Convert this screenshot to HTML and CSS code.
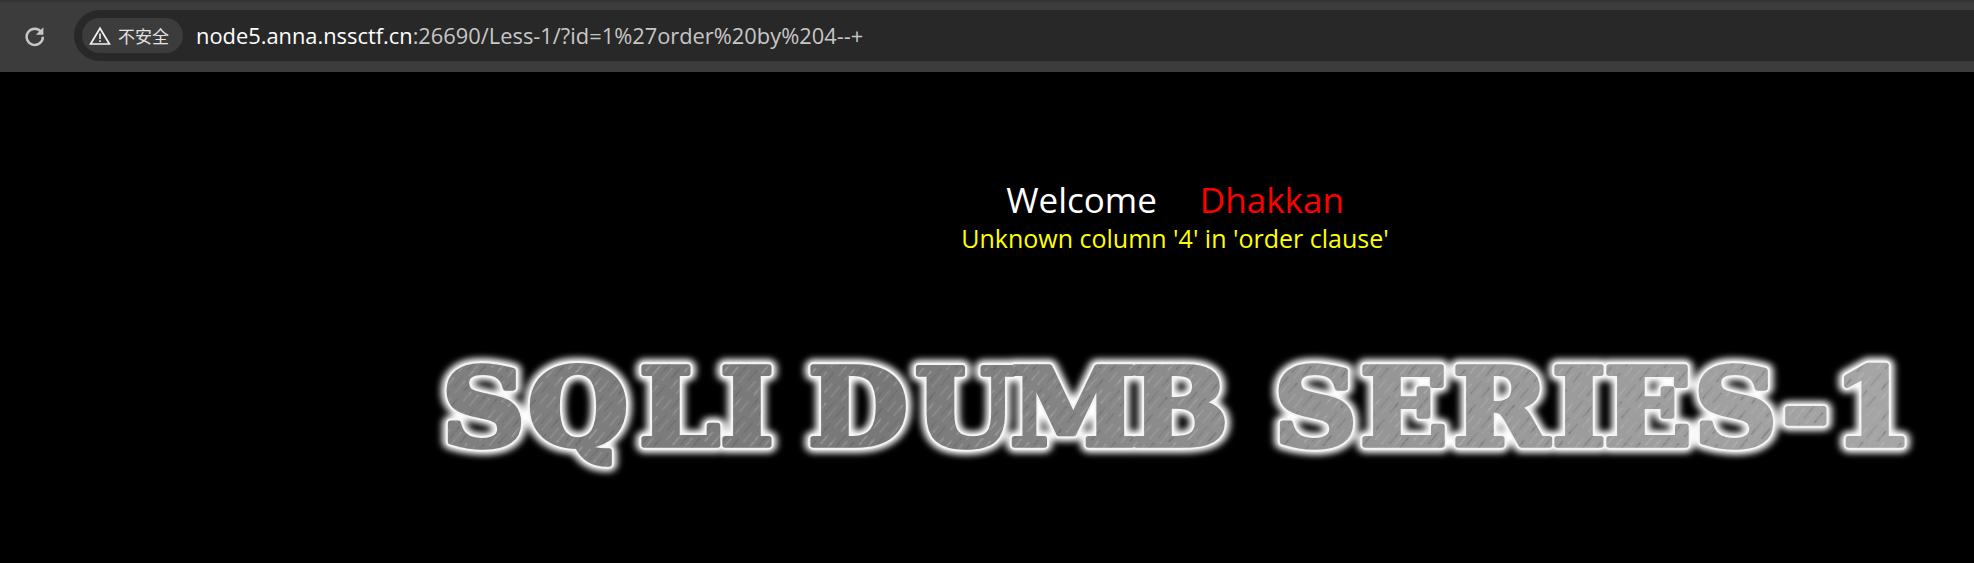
FILE: index.html
```html
<!DOCTYPE html>
<html lang="zh-CN">
<head>
<meta charset="utf-8">
<title>Less-1</title>
<link rel="stylesheet" href="styles.css">
</head>
<body>
<header class="toolbar">
  <svg class="reload" viewBox="0 0 20 20" width="22" height="22"><path d="M15.8 6.4A7.4 7.4 0 1 0 17.2 10.6" fill="none" stroke="#c7c7c7" stroke-width="2.2"/><path d="M17.6 2v6.8h-6.8z" fill="#c7c7c7"/></svg>
  <div class="omnibox">
    <div class="chip">
      <svg class="warn" viewBox="0 0 22 20" width="22" height="20"><path d="M11 2.2 20.4 18H1.6z" fill="none" stroke="#f0f0f0" stroke-width="1.7"/><path d="M10.2 7.5h1.6v5.6h-1.6zM10.2 14.2h1.6v1.7h-1.6z" fill="#f0f0f0"/></svg>
      <span class="chip-text">不安全</span>
    </div>
    <div class="url"><span class="host">node5.anna.nssctf.cn</span>:26690/Less-1/?id=1%27order%20by%204--+</div>
  </div>
</header>
<main class="page">
  <div class="message">
    <div class="welcome">Welcome<span class="name">Dhakkan</span></div>
    <div class="error">Unknown column '4' in 'order clause'</div>
  </div>
  <svg class="logo" viewBox="0 0 1974 160" width="1974" height="160">
    <defs>
      <pattern id="hatch" width="23" height="31" patternUnits="userSpaceOnUse" patternTransform="rotate(-52)">
        <path d="M0 3H15" stroke="#c4c4c4" stroke-width="1" opacity=".35"/>
        <path d="M6 9H23" stroke="#505050" stroke-width="1" opacity=".3"/>
        <path d="M2 14H19" stroke="#bcbcbc" stroke-width="1" opacity=".3"/>
        <path d="M9 20H23" stroke="#4c4c4c" stroke-width="1.2" opacity=".28"/>
        <path d="M0 26H13" stroke="#c8c8c8" stroke-width="1" opacity=".3"/>
      </pattern>
      <linearGradient id="metal" gradientUnits="userSpaceOnUse" x1="440" y1="0" x2="1915" y2="0">
        <stop offset="0" stop-color="#808080"/>
        <stop offset=".3" stop-color="#787878"/>
        <stop offset=".55" stop-color="#929292"/>
        <stop offset="1" stop-color="#a6a6a6"/>
      </linearGradient>
      <filter id="glow" x="-5%" y="-30%" width="110%" height="160%"><feGaussianBlur stdDeviation="3.5"/></filter>
      <text id="title" y="0" x="442 528 639 720 808 915 1010 1131 1274 1360 1453 1552 1604 1694 1782 1833">SQLIDUMBSERIES-1</text>
    </defs>
    <g transform="translate(0 100) scale(1 .93)">
      <use href="#title" class="t-glow" filter="url(#glow)"/>
      <use href="#title" class="t-line"/>
      <use href="#title" class="t-fill"/>
      <use href="#title" class="t-hatch"/>
    </g>
  </svg>
</main>
</body>
</html>
```
FILE: styles.css
```css
* { box-sizing: border-box; }
html, body { margin: 0; height: 100%; background: #000; overflow: hidden; }
body { font-family: "Open Sans", "Noto Sans", "Noto Sans CJK SC", sans-serif; }

.toolbar {
  height: 72px;
  background: #3c3c3c;
  border-top: 2px solid #333;
  padding: 8px 0 11px 24px;
  display: flex;
  align-items: center;
  gap: 28px;
}
.reload { flex: none; }
.omnibox {
  flex: 1;
  height: 51px;
  background: #282828;
  border-radius: 26px 0 0 26px;
  padding-left: 8px;
  display: flex;
  align-items: center;
}
.chip {
  height: 35px;
  width: 101px;
  background: #3c3c3c;
  border-radius: 18px;
  padding-left: 7px;
  display: flex;
  align-items: center;
  gap: 7px;
}
.warn { flex: none; }
.chip-text { color: #e3e3e3; font-size: 17px; font-family: "Noto Sans CJK SC", sans-serif; }
.url { margin-left: 13px; color: #c7c7c7; font-size: 21.85px; white-space: nowrap; }
.host { color: #fff; }

.page { background: #000; }
.message { padding: 107px 0 0 376px; text-align: center; }
.welcome { color: #fff; font-size: 35px; line-height: 42px; }
.name { color: #f00; margin-left: 43px; }
.error { color: #ff0; font-size: 25px; line-height: 30px; margin-top: 2px; }
.logo { display: block; margin-top: 92px; }
.t-glow, .t-line, .t-fill, .t-hatch {
  font-family: "DejaVu Serif", serif;
  font-weight: 700;
  font-size: 115px;
  stroke-linejoin: round;
}
.t-glow { fill: #fff; stroke: #fff; stroke-width: 17px; }
.t-line { fill: #fff; stroke: #f4f4f4; stroke-width: 10px; }
.t-fill { fill: url(#metal); stroke: url(#metal); stroke-width: 6px; }
.t-hatch { fill: url(#hatch); stroke: url(#hatch); stroke-width: 6px; }
```
